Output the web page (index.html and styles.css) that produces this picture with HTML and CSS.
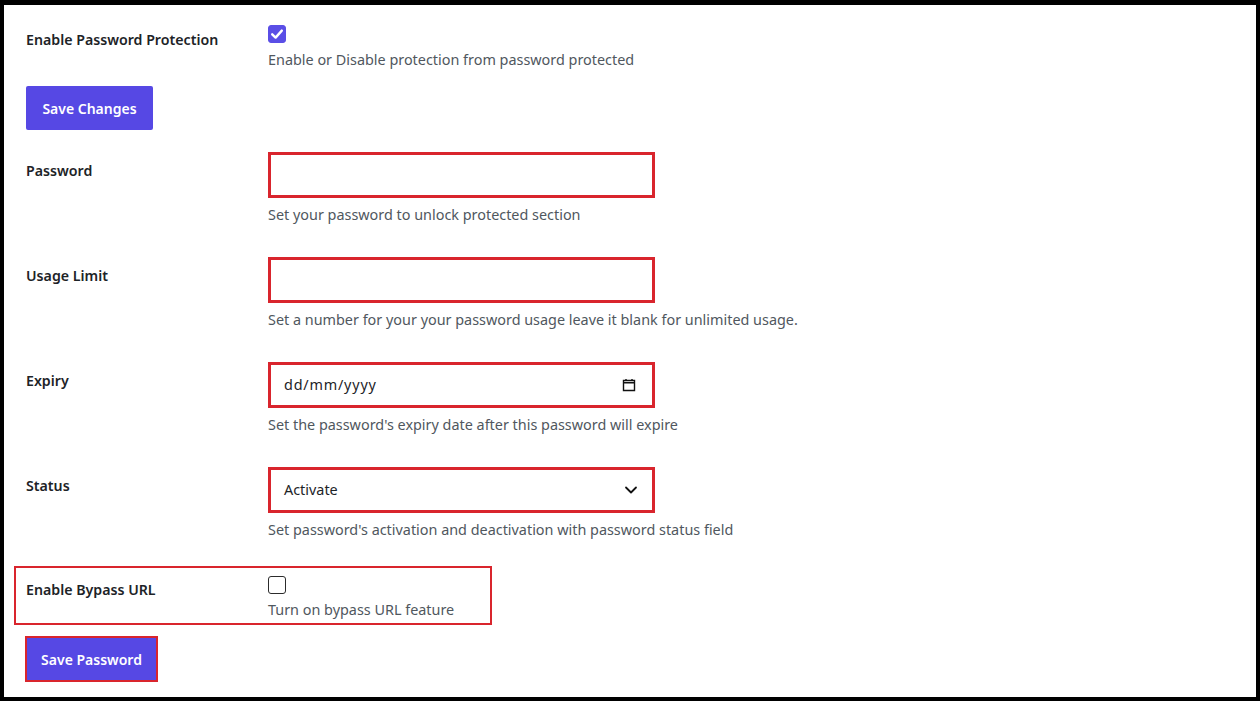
FILE: index.html
```html
<!DOCTYPE html>
<html lang="en">
<head>
<meta charset="utf-8">
<title>Password Protection Settings</title>
<link rel="stylesheet" href="styles.css">
</head>
<body>
<div class="frame">
  <div class="form">
    <div class="row row-first">
      <div class="label">Enable Password Protection</div>
      <div class="field">
        <span class="checkbox checked">
          <svg viewBox="0 0 18 18" width="18" height="18"><path d="M4.2 9.3 L7.6 12.6 L13.8 5.6" fill="none" stroke="#fff" stroke-width="2.4" stroke-linecap="round" stroke-linejoin="round"/></svg>
        </span>
        <div class="desc">Enable or Disable protection from password protected</div>
      </div>
    </div>
    <div class="btn-wrap"><button class="btn btn-changes">Save Changes</button></div>

    <div class="row">
      <div class="label label-input">Password</div>
      <div class="field">
        <div class="input"></div>
        <div class="desc desc-input">Set your password to unlock protected section</div>
      </div>
    </div>

    <div class="row">
      <div class="label label-input">Usage Limit</div>
      <div class="field">
        <div class="input"></div>
        <div class="desc desc-input">Set a number for your your password usage leave it blank for unlimited usage.</div>
      </div>
    </div>

    <div class="row">
      <div class="label label-input">Expiry</div>
      <div class="field">
        <div class="input input-text">
          <span class="val date">dd/mm/yyyy</span>
          <svg class="cal" viewBox="0 0 14 14" width="14" height="14"><path d="M1.5 2.5 H12.5 V12.5 H1.5 Z M1.5 4.8 H12.5" fill="none" stroke="#111" stroke-width="1.4"/><path d="M4 1 V3 M10 1 V3" stroke="#111" stroke-width="1.4"/></svg>
        </div>
        <div class="desc desc-input">Set the password's expiry date after this password will expire</div>
      </div>
    </div>

    <div class="row">
      <div class="label label-input">Status</div>
      <div class="field">
        <div class="input input-text">
          <span class="val">Activate</span>
          <svg class="chev" viewBox="0 0 14 10" width="14" height="10"><path d="M2 2.5 L7 7.5 L12 2.5" fill="none" stroke="#111" stroke-width="1.8" stroke-linecap="round" stroke-linejoin="round"/></svg>
        </div>
        <div class="desc desc-input">Set password's activation and deactivation with password status field</div>
      </div>
    </div>

    <div class="bypass">
      <div class="label">Enable Bypass URL</div>
      <div class="field">
        <span class="checkbox"></span>
        <div class="desc">Turn on bypass URL feature</div>
      </div>
    </div>

    <div class="btn-outline"><button class="btn">Save Password</button></div>
  </div>
</div>
</body>
</html>
```
FILE: styles.css
```css
* { box-sizing: border-box; }
html, body { margin: 0; padding: 0; background: #000; }
body {
  width: 1260px;
  height: 701px;
  overflow: hidden;
  font-family: "Noto Sans", "Open Sans", sans-serif;
  font-size: 14.4px;
  line-height: 20px;
}
.frame {
  width: 1260px;
  height: 701px;
  border-style: solid;
  border-color: #000;
  border-width: 5px 4px 4px 4px;
  background: #fff;
}
.form {
  padding: 20px 0 0 22px;
}
.row {
  display: grid;
  grid-template-columns: 242px 1fr;
  margin-bottom: 32px;
}
.row-first { margin-bottom: 16px; }
.label {
  color: #1d2327;
  font-weight: 600;
  font-size: 14.2px;
  padding-top: 5px;
}
.label-input { padding-top: 9px; }
.field {
  display: flex;
  flex-direction: column;
  align-items: flex-start;
}
.checkbox {
  width: 18px;
  height: 18px;
  border: 1px solid #2c2c2c;
  border-radius: 3px;
  background: #fff;
  margin-bottom: 7px;
  display: block;
}
.checkbox.checked {
  background: #5a4ee6;
  border-color: #5a4ee6;
}
.checkbox svg { display: block; margin: -1px; }
.desc { color: #50575e; }
.desc-input { margin-top: 7px; }
.input {
  width: 387px;
  height: 46px;
  border: 3px solid #d9252d;
  background: #fff;
}
.input-text {
  display: flex;
  align-items: center;
  justify-content: space-between;
  padding: 0 14px 0 13px;
}
.val { color: #1d2327; }
.date { letter-spacing: 0.8px; }
.cal { display: block; margin-right: 2px; }
.chev { display: block; }
.btn-wrap { margin-bottom: 22px; }
.btn {
  font-family: inherit;
  font-size: 14px;
  font-weight: 600;
  color: #fff;
  background: #5648e4;
  border: none;
  border-radius: 2px;
  height: 44px;
  padding: 0;
  cursor: pointer;
}
.btn-changes { width: 127px; }
.bypass {
  display: grid;
  grid-template-columns: 242px 1fr;
  width: 478px;
  height: 59px;
  margin: -6px 0 0 -12px;
  padding: 8px 0 0 10px;
  border: 2px solid #d9252d;
}
.bypass .label { padding-top: 4px; }
.bypass .checkbox { margin-bottom: 6px; }
.btn-outline {
  display: inline-block;
  margin: 11px 0 0 -1px;
  border: 2px solid #d9252d;
}
.btn-outline .btn {
  display: block;
  height: 42px;
  width: 129px;
  border-radius: 0;
}
```
